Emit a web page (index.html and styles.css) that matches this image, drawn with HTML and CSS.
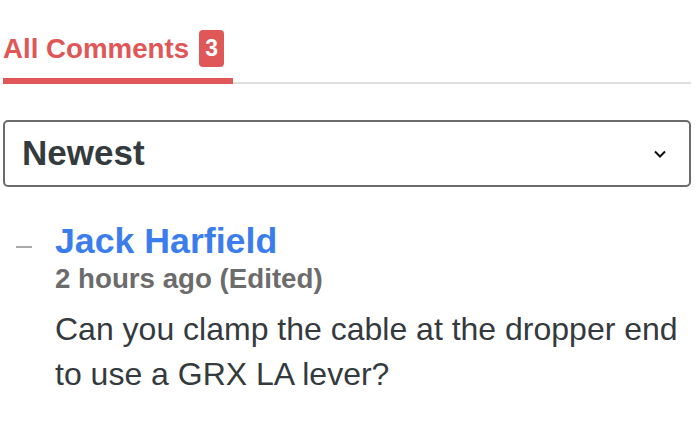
FILE: index.html
```html
<!DOCTYPE html>
<html>
<head>
<meta charset="utf-8">
<link rel="stylesheet" href="styles.css">
</head>
<body>
<div class="page">
  <div class="tabs">
    <div class="tab">
      <span class="tab-label">All Comments</span>
      <span class="badge">3</span>
    </div>
  </div>
  <div class="select">
    <span class="select-value">Newest</span>
    <svg class="caret" width="12" height="8" viewBox="0 0 12 8"><path d="M1 1.5 L6 6.5 L11 1.5" fill="none" stroke="#111" stroke-width="2"/></svg>
  </div>
  <div class="comment">
    <div class="gutter"><span class="collapse"></span></div>
    <div class="content">
      <div class="author">Jack Harfield</div>
      <div class="meta">2 hours ago (Edited)</div>
      <p class="text">Can you clamp the cable at the dropper end to use a GRX LA lever?</p>
    </div>
  </div>
</div>
</body>
</html>
```
FILE: styles.css
```css
html, body {
  margin: 0;
  padding: 0;
  background: #fff;
}
.page {
  padding: 0 8px 0 3px;
  font-family: "Liberation Sans", Arial, sans-serif;
}
.tabs {
  display: flex;
  border-bottom: 2px solid #dedede;
}
.tab {
  display: flex;
  align-items: center;
  gap: 10px;
  padding: 30px 9px 11px 0;
  border-bottom: 6px solid #e05758;
  margin-bottom: -2px;
}
.tab-label {
  color: #e05758;
  font-weight: bold;
  font-size: 27.7px;
  line-height: 32px;
}
.badge {
  display: flex;
  align-items: center;
  justify-content: center;
  width: 25px;
  height: 37px;
  border-radius: 4px;
  background: #e05758;
  color: #fff;
  font-weight: bold;
  font-size: 23px;
}
.select {
  margin-top: 36px;
  height: 67px;
  box-sizing: border-box;
  border: 2px solid #6a6a6a;
  border-radius: 5px;
  display: flex;
  align-items: center;
  justify-content: space-between;
  padding: 0 23px 2px 17px;
}
.select-value {
  color: #343b3e;
  font-weight: bold;
  font-size: 35px;
}
.caret {
  display: block;
  margin-top: 2px;
}
.comment {
  display: flex;
  margin-top: 34px;
}
.gutter {
  width: 52px;
  flex: none;
}
.collapse {
  display: block;
  width: 16px;
  height: 2px;
  background: #a9a9a9;
  margin: 25px 0 0 13px;
}
.content {
  flex: 1;
  min-width: 0;
}
.author {
  color: #3b7ded;
  font-weight: bold;
  font-size: 35.7px;
  line-height: 40px;
}
.meta {
  color: #6c6c6c;
  font-weight: bold;
  font-size: 27.7px;
  line-height: 36px;
}
.text {
  margin: 10px 0 0;
  color: #343a3e;
  font-size: 32px;
  line-height: 45px;
}
```
